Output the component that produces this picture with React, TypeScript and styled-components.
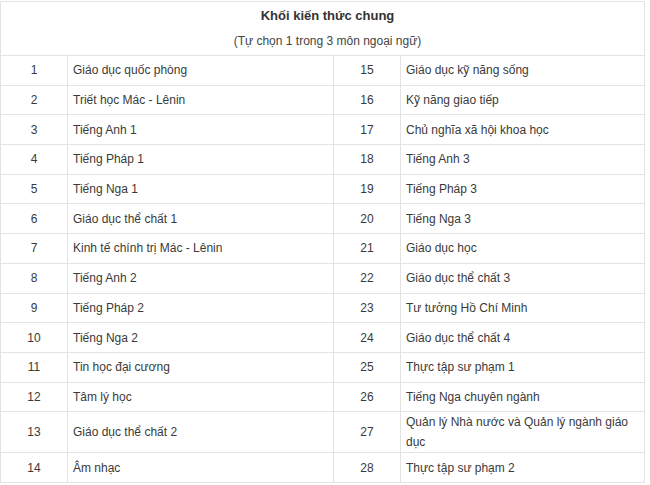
import React from "react";
import styled, { createGlobalStyle } from "styled-components";

const GlobalStyle = createGlobalStyle`
  html, body { margin: 0; padding: 0; background: #ffffff; }
  body { font-family: "Liberation Sans", Arial, sans-serif; color: #333333; }
`;

const Wrapper = styled.div`
  width: 648px;
  padding-top: 1px;
`;

const Table = styled.table`
  width: 644px;
  border-collapse: collapse;
  table-layout: fixed;
  font-size: 12px;
  color: #3a3a3a;
`;

const HeaderCell = styled.th`
  border: 1px solid #e3e3e3;
  padding: 4px 0 4px 10px;
  text-align: center;
  font-weight: normal;
  line-height: 20px;
`;

const Title = styled.div`
  font-weight: bold;
  font-size: 13px;
  color: #333333;
`;

const Subtitle = styled.div`
  margin-top: 5px;
  color: #444444;
`;

const Row = styled.tr`
  height: 29.7px;
`;

const NumCell = styled.td`
  border: 1px solid #e3e3e3;
  text-align: center;
  vertical-align: middle;
  padding: 0 6px;
  line-height: 20px;
`;

const NameCell = styled.td`
  border: 1px solid #e3e3e3;
  text-align: left;
  vertical-align: middle;
  padding: 0 6px 0 5px;
  line-height: 20px;
`;

type Pair = [string, string, string, string];

const rows: Pair[] = [
  ["1", "Giáo dục quốc phòng", "15", "Giáo dục kỹ năng sống"],
  ["2", "Triết học Mác - Lênin", "16", "Kỹ năng giao tiếp"],
  ["3", "Tiếng Anh 1", "17", "Chủ nghĩa xã hội khoa học"],
  ["4", "Tiếng Pháp 1", "18", "Tiếng Anh 3"],
  ["5", "Tiếng Nga 1", "19", "Tiếng Pháp 3"],
  ["6", "Giáo dục thể chất 1", "20", "Tiếng Nga 3"],
  ["7", "Kinh tế chính trị Mác - Lênin", "21", "Giáo dục học"],
  ["8", "Tiếng Anh 2", "22", "Giáo dục thể chất 3"],
  ["9", "Tiếng Pháp 2", "23", "Tư tưởng Hồ Chí Minh"],
  ["10", "Tiếng Nga 2", "24", "Giáo dục thể chất 4"],
  ["11", "Tin học đại cương", "25", "Thực tập sư phạm 1"],
  ["12", "Tâm lý học", "26", "Tiếng Nga chuyên ngành"],
  ["13", "Giáo dục thể chất 2", "27", "Quản lý Nhà nước và Quản lý ngành giáo dục"],
  ["14", "Âm nhạc", "28", "Thực tập sư phạm 2"],
];

export default function App() {
  return (
    <Wrapper>
      <GlobalStyle />
      <Table>
        <colgroup>
          <col style={{ width: 67 }} />
          <col style={{ width: 266 }} />
          <col style={{ width: 67 }} />
          <col style={{ width: 244 }} />
        </colgroup>
        <thead>
          <tr>
            <HeaderCell colSpan={4}>
              <Title>Khối kiến thức chung</Title>
              <Subtitle>(Tự chọn 1 trong 3 môn ngoại ngữ)</Subtitle>
            </HeaderCell>
          </tr>
        </thead>
        <tbody>
          {rows.map((r) => (
            <Row key={r[0]}>
              <NumCell>{r[0]}</NumCell>
              <NameCell>{r[1]}</NameCell>
              <NumCell>{r[2]}</NumCell>
              <NameCell>{r[3]}</NameCell>
            </Row>
          ))}
        </tbody>
      </Table>
    </Wrapper>
  );
}
